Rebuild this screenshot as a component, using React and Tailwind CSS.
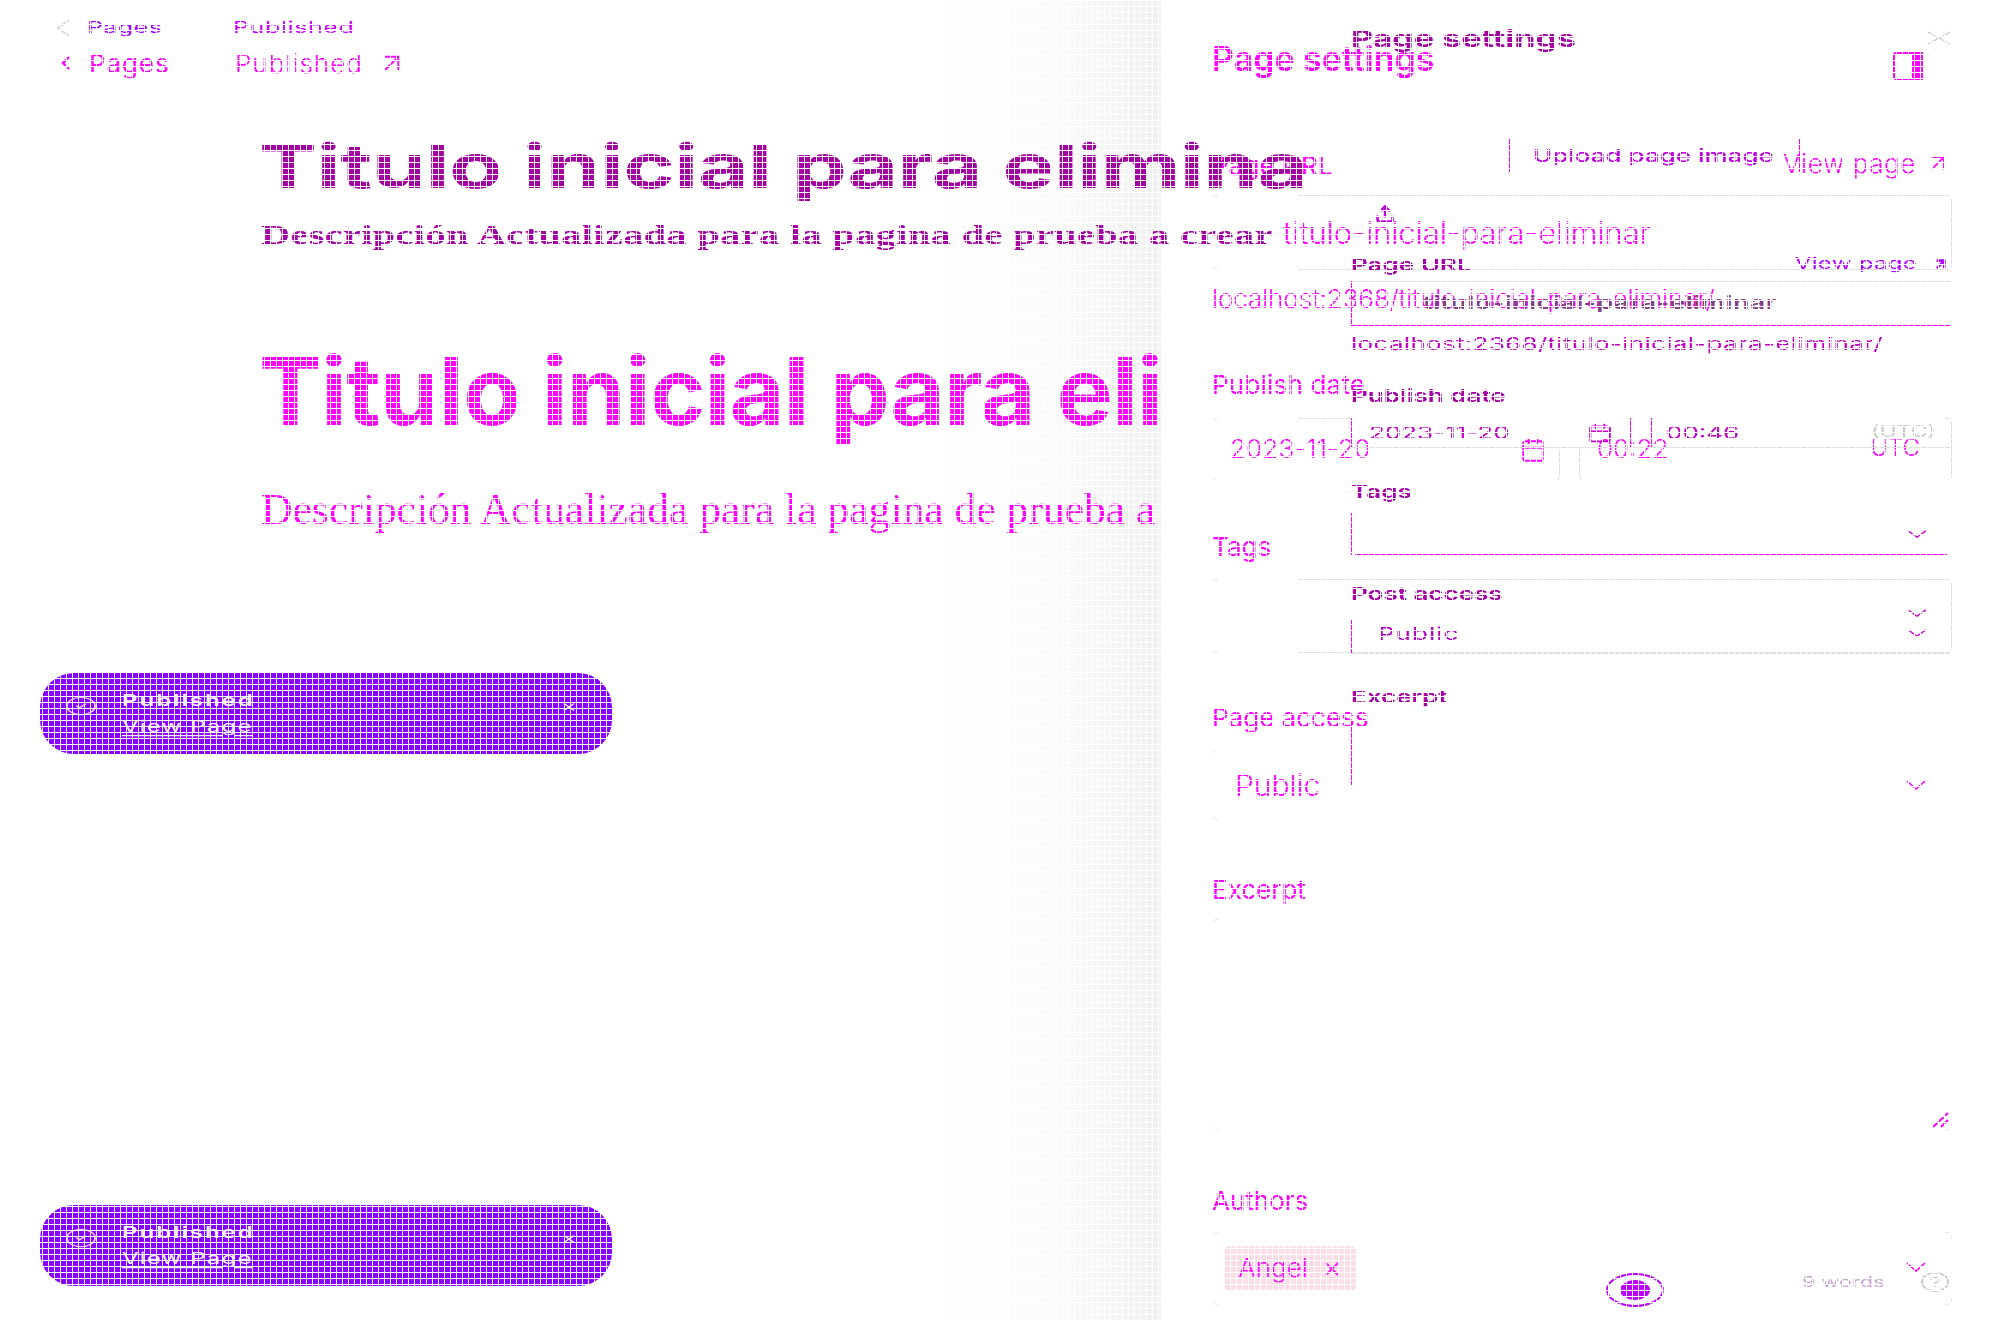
import React from "react";
import { ArrowUpRight, X, Calendar, CircleHelp, CircleCheck, Upload } from "lucide-react";

const sans = "font-['Inter',sans-serif]";
const serif = "font-['Liberation_Serif',serif]";
const sq = "inline-block origin-left scale-y-[0.66] whitespace-nowrap";
const line = "border-[#dedede]";
const mag = "border-[#ff00ff]";

function Chev({ w = 20, h = 10, className = "" }) {
  return (
    <svg className={className} width={w} height={h} viewBox="0 0 20 10" preserveAspectRatio="none" fill="none" stroke="currentColor" strokeWidth="1.6">
      <path d="M1 1l9 8 9-8" />
    </svg>
  );
}

function Corner({ bottom, right }) {
  return (
    <span
      className={
        "absolute w-[7px] h-[7px] border-[#e4e4e4] " +
        (right ? "right-0 border-r " : "left-0 border-l ") +
        (bottom ? "bottom-0 border-b " : "top-0 border-t ") +
        (bottom ? (right ? "rounded-br-[5px]" : "rounded-bl-[5px]") : right ? "rounded-tr-[5px]" : "rounded-tl-[5px]")
      }
    />
  );
}

function Box({ className = "", children }) {
  return (
    <div className={"relative w-[740px] " + className}>
      <Corner />
      <Corner bottom />
      <span className={"absolute left-[87px] right-0 inset-y-0 rounded-r-[5px] border border-l-0 " + line} />
      <div className="relative h-full flex items-center">{children}</div>
    </div>
  );
}

function Toast({ className = "" }) {
  return (
    <div className={"ml-[40px] w-[572px] h-[81px] rounded-[34px] bg-[#8800ff] flex items-center pl-[28px] pr-[34px] text-[#f4ecff] " + className}>
      <CircleCheck className="w-[26px] h-[26px] text-[#f0c0ff] mb-[16px] scale-y-[0.8] scale-x-[1.3]" strokeWidth={1.4} />
      <div className="ml-[28px] flex flex-col gap-[6px] flex-1">
        <span className={"text-[24px] leading-[20px] tracking-[2px] font-semibold " + sq}>Published</span>
        <span className={"text-[24px] leading-[20px] tracking-[1.2px] underline underline-offset-4 " + sq}>View Page</span>
      </div>
      <X className="w-[18px] h-[18px] mb-[14px] scale-y-[0.7]" strokeWidth={2.4} />
    </div>
  );
}

function LayerA() {
  return (
    <div className={"relative w-[2000px] h-[1320px] overflow-hidden flex bg-white text-[#ff00ff] " + sans}>
      <div className="relative w-[1161px] shrink-0 overflow-hidden">
        <div className="absolute inset-y-0 right-0 w-[230px] bg-linear-to-r from-white via-[#fbfbfb] to-[#f0f0f0]" />
        <div className="relative">
          <div className="flex items-center h-[32px] mt-[47px]">
            <svg className="ml-[60px]" width="11" height="16" viewBox="0 0 11 16" fill="none" stroke="currentColor" strokeWidth="2.4">
              <path d="M9 2 3 8l6 6" />
            </svg>
            <span className="ml-[18px] text-[26px] tracking-[0.9px] w-[146px]">Pages</span>
            <span className="text-[26px] tracking-[1px] font-light">Published</span>
            <ArrowUpRight className="ml-[14px] w-[30px] h-[30px]" strokeWidth={1.5} />
          </div>
          <div className="mt-[248px] pl-[259px] h-[128px] flex items-center text-[94px] tracking-[-0.5px] font-bold whitespace-nowrap">Titulo inicial para eliminar</div>
          <div className={"mt-[25px] pl-[261px] h-[60px] flex items-center text-[43.6px] whitespace-nowrap " + serif}>Descripción Actualizada para la pagina de prueba a crear</div>
        </div>
      </div>
      <div className="relative flex-1 bg-white pl-[51px]">
        <div className="flex items-center h-[40px] mt-[38px] w-[740px] relative">
          <span className="text-[34px] font-semibold whitespace-nowrap">Page settings</span>
          <svg className="ml-auto mr-[29px] mt-[16px]" width="30" height="28" viewBox="0 0 30 28" fill="none" stroke="#ff00ff" strokeWidth="2">
            <rect x="1" y="1" width="28" height="26" rx="2" />
            <rect x="20" y="1" width="9" height="26" fill="#ff00ff" />
          </svg>
        </div>
        <div className="flex items-center justify-between h-[32px] mt-[69px] w-[740px]">
          <span className="text-[26px] font-medium mt-[4px]">Page URL</span>
          <span className="flex items-center text-[26px] font-light tracking-[0.6px]">View page<ArrowUpRight className="ml-[8px] w-[28px] h-[28px]" strokeWidth={1.5} /></span>
        </div>
        <Box className="h-[75px] mt-[16px]">
          <span className="ml-[71px] mt-[2px] text-[31px] font-light tracking-[-0.1px] whitespace-nowrap">titulo-inicial-para-eliminar</span>
        </Box>
        <div className="h-[28px] mt-[14px] flex items-center text-[26px] font-light tracking-[-0.1px] whitespace-nowrap">localhost:2368/titulo-inicial-para-eliminar/</div>
        <div className="h-[28px] mt-[58px] flex items-center text-[26px] tracking-[0.2px]">Publish date</div>
        <div className="flex gap-[19px] h-[63px] mt-[20px]">
          <div className="relative w-[348px] h-full flex items-center">
            <Corner />
            <Corner bottom />
            <span className={"absolute left-[87px] right-0 bottom-0 h-[32px] rounded-br-[5px] border-b border-r " + line} />
            <span className={"absolute left-[87px] w-[52px] top-0 border-t " + line} />
            <span className="ml-[18px] -mt-[3px] text-[26px] tracking-[0.15px] font-light">2023-11-20</span>
            <Calendar className="ml-auto mr-[14px] w-[26px] h-[26px]" strokeWidth={1.8} />
          </div>
          <div className="relative w-[373px] h-full flex items-center">
            <span className={"absolute left-0 right-0 bottom-0 h-[32px] rounded-b-[5px] border-b border-x " + line} />
            <span className={"absolute right-0 w-[8px] top-0 h-[32px] rounded-tr-[5px] border-t border-r " + line} />
            <span className="ml-[18px] -mt-[3px] text-[26px] font-light">00:22</span>
            <span className="ml-auto mr-[32px] -mt-[3px] text-[24px] font-light">UTC</span>
          </div>
        </div>
        <div className="h-[28px] mt-[51px] flex items-center text-[26px]">Tags</div>
        <Box className="h-[74px] mt-[19px]" />
        <div className="h-[28px] mt-[50px] flex items-center text-[26px]">Page access</div>
        <div className="relative w-[740px] h-[70px] mt-[19px] flex items-center">
          <Corner />
          <Corner bottom />
          <span className={"absolute left-[87px] w-[52px] top-0 border-t " + line} />
          <span className="ml-[23px] text-[30px] font-light">Public</span>
          <Chev className="ml-auto mr-[26px]" />
        </div>
        <div className="h-[28px] mt-[55px] flex items-center text-[26px]">Excerpt</div>
        <div className="relative w-[740px] h-[211px] mt-[16px]">
          <Corner />
          <Corner bottom />
          <Corner right bottom />
          <svg className="absolute right-[2px] bottom-[2px]" width="18" height="16" viewBox="0 0 18 16" fill="none" stroke="#ff00ff" strokeWidth="2">
            <path d="M1 15 16 1M9 15 16 8" />
          </svg>
        </div>
        <div className="h-[28px] mt-[56px] flex items-center text-[26px]">Authors</div>
        <div className="relative w-[740px] h-[73px] mt-[18px] flex items-center pl-[13px]">
          <Corner />
          <Corner bottom />
          <Corner right />
          <Corner right bottom />
          <span className="flex items-center justify-center h-[45px] w-[131px] rounded-[5px] bg-[#fbdde8] text-[26px] font-light">
            <span className="-mt-[2px]">Angel</span><X className="ml-[13px] w-[22px] h-[22px]" strokeWidth={2} />
          </span>
          <Chev className="ml-auto mr-[26px] -mt-[4px]" />
        </div>
      </div>
    </div>
  );
}

function LayerB() {
  return (
    <div className={"absolute inset-0 flex text-[#a400a4] pointer-events-none " + sans}>
      <div className="w-[1351px] shrink-0">
        <div className="flex items-center h-[20px] mt-[18px]">
          <svg className="ml-[55px] text-[#d8d8d8]" width="16" height="20" viewBox="0 0 16 20" fill="none" stroke="currentColor" strokeWidth="2">
            <path d="M14 2 3 10l11 8" />
          </svg>
          <span className={"ml-[16px] w-[146px] text-[25px] tracking-[0.4px] text-[#a400ff] " + sq}>Pages</span>
          <span className={"text-[25px] tracking-[0.6px] text-[#cc00ff] " + sq}>Published</span>
        </div>
        <div className="mt-[102px] pl-[259px] h-[52px] flex items-center text-[87px] tracking-[-0.2px] font-bold">
          <span className="inline-block origin-left scale-y-[0.7] whitespace-nowrap">Titulo inicial para elimina</span>
        </div>
        <div className={"mt-[29px] pl-[261px] h-[28px] flex items-center text-[40px] font-bold " + serif}>
          <span className={sq + " tracking-[0.5px]"}>Descripción Actualizada para la pagina de prueba a crear</span>
        </div>
        <Toast className="mt-[424px]" />
        <Toast className="mt-[451px]" />
      </div>
      <div className="w-[600px] shrink-0 relative">
        <div className="flex items-center justify-between h-[40px] mt-[18px]">
          <span className={"text-[34px] font-bold " + sq}>Page settings</span>
          <svg className="text-[#c8c8c8]" width="24" height="14" viewBox="0 0 24 14" fill="none" stroke="currentColor" strokeWidth="1.4">
            <path d="M1 1l22 12M23 1 1 13" />
          </svg>
        </div>
        <div className="h-[34px] mt-[80px] ml-[158px] w-[291px] relative flex items-center pl-[24px]">
          <span className={"absolute inset-x-0 top-0 border-t " + line} />
          <span className={"absolute inset-y-0 left-0 border-l " + mag} />
          <span className={"absolute inset-y-0 right-0 border-r " + mag} />
          <span className={"text-[#c000e0] text-[26px] font-medium " + sq}>Upload page image</span>
        </div>
        <div className="h-[20px] mt-[32px] ml-[24px]">
          <Upload className="w-[20px] h-[20px] text-[#c000e0]" strokeWidth={3} />
        </div>
        <div className="h-[20px] mt-[30px] flex items-center justify-between">
          <span className={"text-[26px] font-semibold " + sq}>Page URL</span>
          <span className="flex items-center text-[#b000ff]">
            <span className={"text-[24px] tracking-[0.3px] " + sq}>View page</span>
            <ArrowUpRight className="ml-[14px] w-[20px] h-[16px]" strokeWidth={4} />
          </span>
        </div>
        <div className={"relative h-[45px] mt-[7px] flex items-center pl-[72px] text-[#804080]"}>
          <span className={"absolute inset-x-0 top-0 border-t " + line} />
          <span className={"absolute inset-x-0 bottom-0 border-b " + mag} />
          <span className={"absolute top-0 bottom-0 left-0 border-l " + mag} />
          <span className={"absolute top-[6px] bottom-0 right-0 border-r " + mag} />
          <span className={"text-[27px] font-semibold tracking-[0.4px] " + sq}>titulo-inicial-para-eliminar</span>
        </div>
        <div className="h-[20px] mt-[7px] flex items-center text-[#c000c0]">
          <span className={"text-[26px] tracking-[0.3px] " + sq}>localhost:2368/titulo-inicial-para-eliminar/</span>
        </div>
        <div className="h-[20px] mt-[32px] flex items-center">
          <span className={"text-[26px] font-semibold " + sq}>Publish date</span>
        </div>
        <div className="relative h-[30px] mt-[13px] flex items-center text-[#c000c0] border-b border-[#dedede]">
          <span className={"absolute top-0 bottom-0 left-0 border-l " + mag} />
          <span className={"ml-[18px] w-[219px] text-[26px] " + sq}>2023-11-20</span>
          <Calendar className="w-[20px] h-[20px] mx-[2px] scale-x-[1.3] text-[#d000d0]" strokeWidth={2} />
          <span className="ml-[18px] w-[22px] h-full border-x border-[#ff00ff]" />
          <span className={"ml-[14px] w-[205px] text-[26px] " + sq}>00:46</span>
          <span className={"text-[23px] text-[#c8c8c8] " + sq}>(UTC)</span>
        </div>
        <div className="h-[20px] mt-[33px] flex items-center">
          <span className={"text-[26px] font-semibold " + sq}>Tags</span>
        </div>
        <div className="relative h-[42px] mt-[12px] flex items-center justify-end pr-[24px] text-[#d000d0]">
          <span className={"absolute top-0 bottom-0 left-0 border-l " + mag} />
          <span className={"absolute top-0 bottom-0 right-0 border-r " + mag} />
          <span className={"absolute inset-x-[4px] bottom-0 border-b " + mag} />
          <Chev h={8} />
        </div>
        <div className="h-[20px] mt-[28px] flex items-center">
          <span className={"text-[26px] font-semibold " + sq}>Post access</span>
        </div>
        <div className="relative h-[42px] mt-[9px] flex items-center pl-[27px] pr-[24px] text-[#b000c0]">
          <span className={"absolute inset-x-[4px] top-0 border-t " + mag} />
          <span className={"absolute top-[8px] bottom-0 left-0 border-l " + mag} />
          <span className={"absolute inset-x-0 bottom-0 border-b " + line} />
          <span className={"text-[26px] tracking-[1px] " + sq}>Public</span>
          <span className="ml-auto flex flex-col gap-[12px] text-[#d000d0] -mt-[20px]">
            <Chev h={8} />
            <Chev h={8} />
          </span>
        </div>
        <div className="h-[20px] mt-[32px] flex items-center">
          <span className={"text-[26px] font-semibold " + sq}>Excerpt</span>
        </div>
        <div className="relative h-[65px] mt-[14px]">
          <span className={"absolute inset-y-0 left-0 border-l " + mag} />
          <span className={"absolute top-0 h-[35px] right-0 border-r " + mag} />
        </div>
        <div className="h-[36px] mt-[479px] flex items-center">
          <div className="ml-[255px] w-[58px] h-[34px] mt-[16px] rounded-[50%] border-2 border-[#c000ff] flex items-center justify-center">
            <span className="w-[30px] h-[20px] rounded-[50%] bg-[#c000ff]" />
          </div>
          <span className="ml-[138px] text-[#c8a0d0] text-[21px] tracking-[0.4px]">
            <span className={sq}>9 words</span>
          </span>
          <CircleHelp className="ml-auto w-[26px] h-[26px] scale-x-[1.2] scale-y-[0.85] text-[#c8c8c8] mr-[3px]" strokeWidth={1.6} />
        </div>
      </div>
    </div>
  );
}

export default function App() {
  return (
    <div className="relative w-[2000px] h-[1320px] overflow-hidden bg-white">
      <LayerA />
      <LayerB />
      <div className="absolute inset-0 pointer-events-none bg-[linear-gradient(to_right,#fff_1px,transparent_1px),linear-gradient(to_bottom,#fff_1px,transparent_1px)] bg-size-[6px_6px]" />
    </div>
  );
}
